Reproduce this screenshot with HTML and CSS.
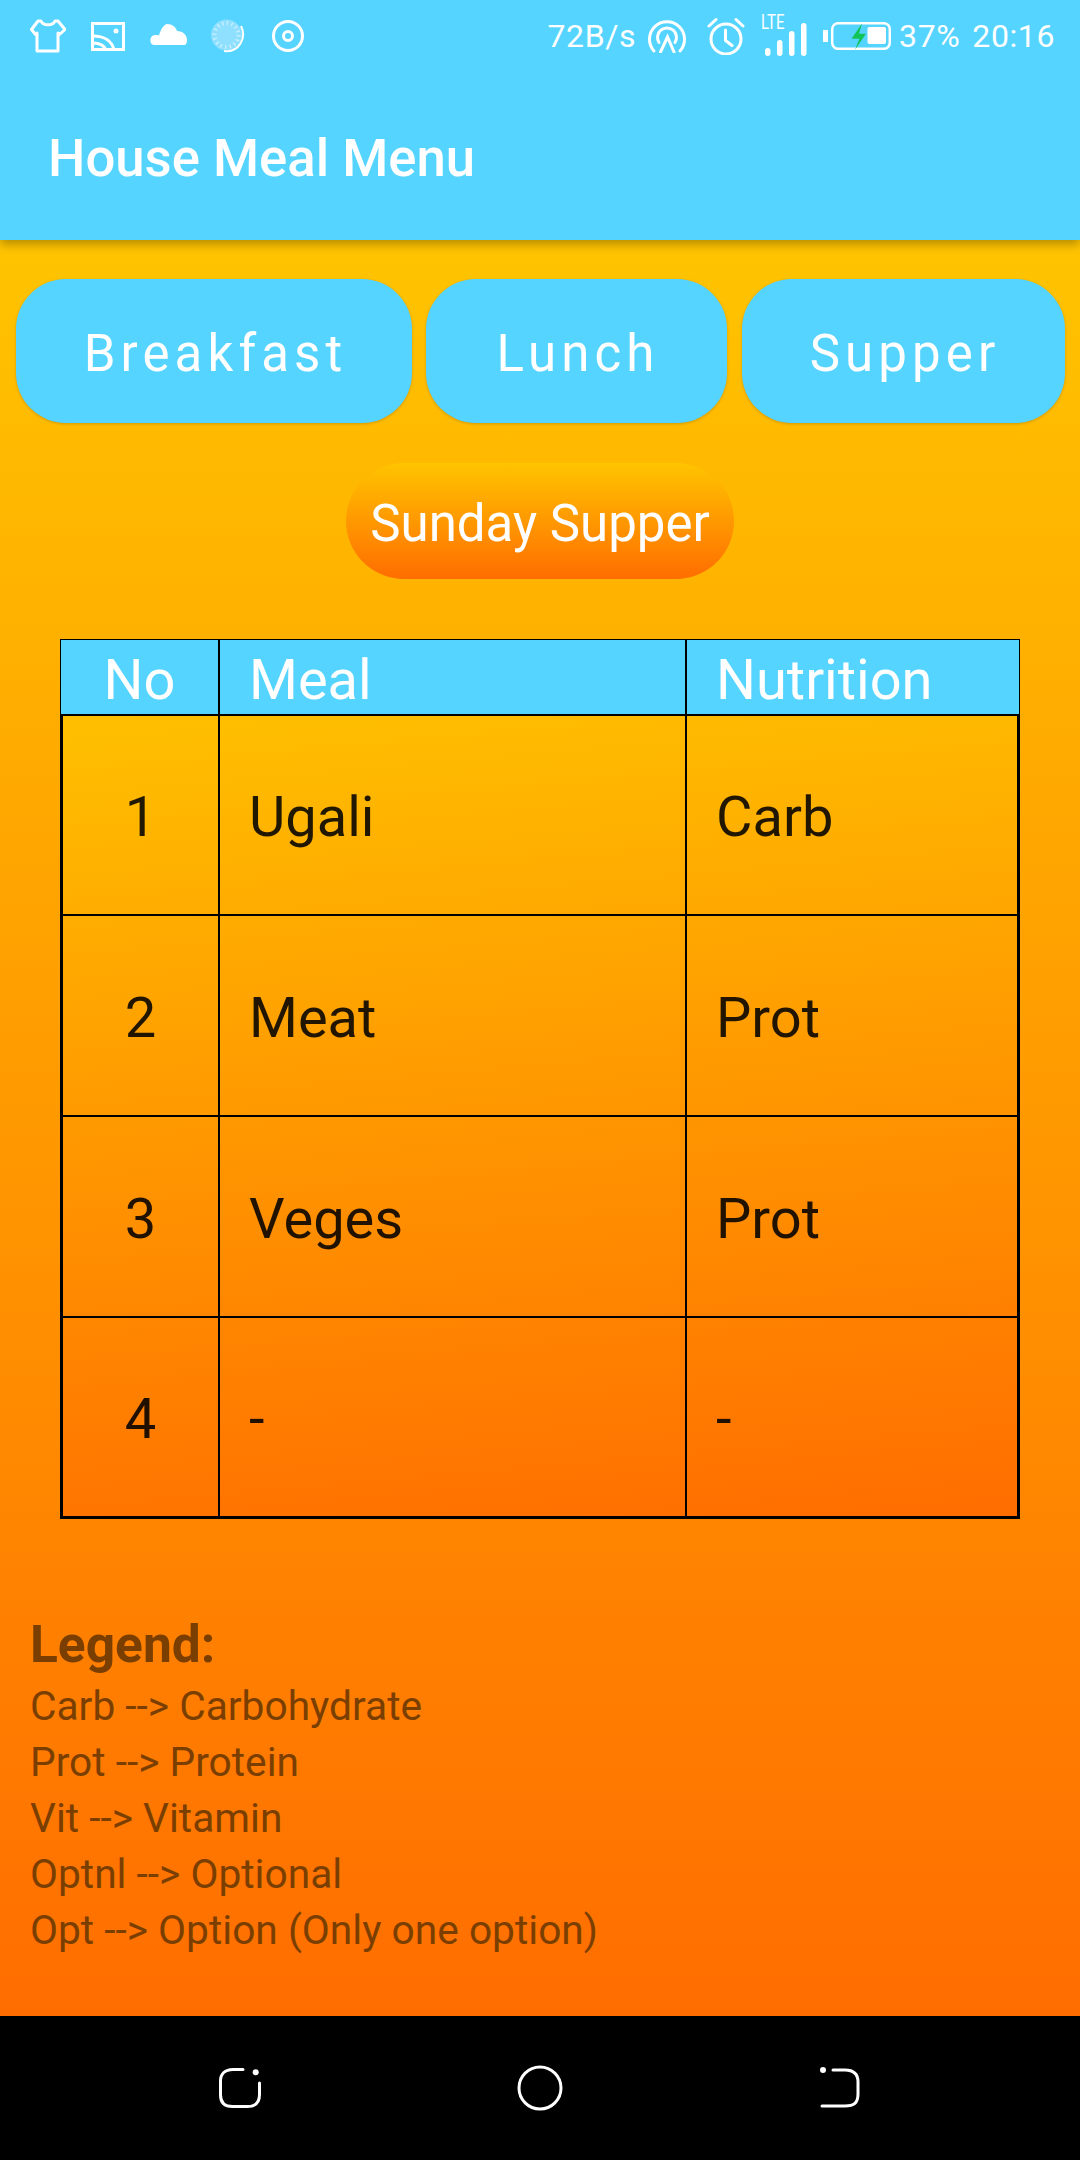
FILE: index.html
```html
<!doctype html>
<html>
<head>
<meta charset="utf-8">
<title>House Meal Menu</title>
<link rel="stylesheet" href="styles.css">
</head>
<body>
<div class="phone">
	<header class="appbar">
		<div class="status">
			<div class="status-left">
				<svg class="ic-shirt" width="36" height="34" viewBox="0 0 36 34" fill="none" stroke="#fff" stroke-width="3" stroke-linejoin="round"><path d="M8 2h3c2 5 12 5 14 0h3l7 8.5-5.5 5-1.5-1.5V32H7V14l-1.5 1.5-4-5z"/></svg>
				<svg width="34" height="29" viewBox="0 0 34 29" fill="none" stroke="#fff" stroke-width="3"><rect x="1.5" y="1.5" width="31" height="26"/><path d="M2 14c11 0 19 5 21 14M2 21c6 0 11 2 13 7"/><circle cx="25" cy="9" r="2.5" fill="#fff" stroke="none"/></svg>
				<svg class="ic-cloud" width="38" height="21" viewBox="0 0 38 21" fill="#fff"><path d="M5 21C0 21 0 11 6 11c1 0 3 0 4 .5C12 4 16 0 18 0c5 0 9 3 10 7 6 0 10 4 10 9 0 3-1 5-3 5z"/></svg>
				<svg width="35" height="36" viewBox="0 0 35 36"><circle cx="15.5" cy="17" r="15.5" fill="#8fe0ff"/><circle cx="15.5" cy="17" r="12" fill="none" stroke="#c4eeff" stroke-width="4" stroke-dasharray="1.5 3.2"/><path d="M30 8c6 12-2 27-17 25" fill="none" stroke="#fff" stroke-width="2"/></svg>
				<svg class="ic-disc" width="32" height="32" viewBox="0 0 32 32" fill="none" stroke="#fff" stroke-width="3"><circle cx="16" cy="16" r="14.5"/><circle cx="16" cy="16" r="4.5"/></svg>
			</div>
			<div class="status-right">
				<span>72B/s</span>
				<svg class="ic-wifi" width="38" height="34" viewBox="0 0 38 34" fill="none" stroke="#fff" stroke-width="3" stroke-linecap="round"><path d="M6 32A17.5 17.5 0 1 1 32 32"/><path d="M11 23.5A9.5 9.5 0 1 1 27 23.5"/><path d="M12.5 33L19.5 18 26 33"/></svg>
				<svg class="ic-alarm" width="38" height="38" viewBox="0 0 38 38" fill="none" stroke="#fff" stroke-width="3" stroke-linecap="round"><circle cx="19" cy="22" r="15"/><path d="M18.5 13v10.5l6.5 5M2 9l7-6.5M29 2.5L36 9"/></svg>
				<div class="signal">
					<span class="lte">LTE</span>
					<svg width="46" height="33" viewBox="0 0 46 33" fill="#fff"><rect x="4" y="25" width="5.5" height="8" rx="2.7"/><rect x="16" y="17" width="5.5" height="16" rx="2.7"/><rect x="28" y="8" width="5.5" height="25" rx="2.7"/><rect x="40" y="0" width="5.5" height="33" rx="2.7"/></svg>
				</div>
				<svg class="ic-batt" width="68" height="28" viewBox="0 0 68 28"><rect x="0" y="8" width="5" height="12" fill="#fff"/><rect x="9.2" y="1.2" width="57.6" height="25.6" rx="6" fill="none" stroke="#fff" stroke-width="2.5"/><rect x="44.5" y="5" width="18.5" height="17" rx="2" fill="#fff"/><path d="M39 1.5L28.5 16.7h7.9L32 27.7 43 11.7h-7z" fill="#12c458"/></svg>
				<span class="st-pct">37%</span>
				<span class="st-time">20:16</span>
			</div>
		</div>
		<h1 class="title">House Meal Menu</h1>
	</header>

	<main class="content">
		<div class="tabs">
			<a class="tab tab-b" href="#">Breakfast</a>
			<a class="tab tab-l" href="#">Lunch</a>
			<a class="tab tab-s" href="#">Supper</a>
		</div>

		<div class="day-wrap"><span class="day">Sunday Supper</span></div>

		<div class="grid-wrap">
			<div class="row head">
				<div class="cell num">No</div>
				<div class="cell">Meal</div>
				<div class="cell">Nutrition</div>
			</div>
			<div class="body">
				<div class="row"><div class="cell num">1</div><div class="cell">Ugali</div><div class="cell">Carb</div></div>
				<div class="row"><div class="cell num">2</div><div class="cell">Meat</div><div class="cell">Prot</div></div>
				<div class="row"><div class="cell num">3</div><div class="cell">Veges</div><div class="cell">Prot</div></div>
				<div class="row"><div class="cell num">4</div><div class="cell">-</div><div class="cell">-</div></div>
			</div>
		</div>

		<div class="legend">
			<h2>Legend:</h2>
			<p>Carb --&gt; Carbohydrate</p>
			<p>Prot --&gt; Protein</p>
			<p>Vit --&gt; Vitamin</p>
			<p>Optnl --&gt; Optional</p>
			<p>Opt --&gt; Option (Only one option)</p>
		</div>
	</main>

	<nav class="navbar">
		<svg width="44" height="42" viewBox="0 0 44 42" fill="none" stroke="#fff" stroke-width="3" stroke-linecap="round"><path d="M24 2.5H14C6 2.5 1.5 7 1.5 14v14c0 8 4 11.5 12 11.5h15c8 0 12-4 12-12V16"/><circle cx="36.7" cy="5.3" r="3" fill="#fff" stroke="none"/></svg>
		<svg width="46" height="46" viewBox="0 0 46 46" fill="none" stroke="#fff" stroke-width="3"><circle cx="23" cy="23" r="21"/></svg>
		<svg width="44" height="42" viewBox="0 0 44 42" fill="none" stroke="#fff" stroke-width="3" stroke-linecap="round"><path d="M17 3h12c9 0 13 4 13 12v12c0 9-4 12-13 12H6"/><circle cx="7" cy="3" r="3" fill="#fff" stroke="none"/></svg>
	</nav>
</div>
</body>
</html>
```

FILE: styles.css
```css
*{ margin:0; padding:0; box-sizing:border-box; }
html,body{ height:100%; }
body{ font-family:Roboto,"Liberation Sans",sans-serif; }
a{ text-decoration:none; color:#fff; }

.phone{ width:1080px; height:2160px; display:flex; flex-direction:column; overflow:hidden; }

/* top */
.appbar{ height:240px; flex:none; background:#55d4ff; color:#fff; box-shadow:0 4px 10px rgba(0,0,0,.3); position:relative; z-index:1; }
.status{ height:72px; display:flex; justify-content:space-between; align-items:center; }
.status-left{ display:flex; align-items:center; gap:24px; padding-left:30px; }
.ic-shirt{ margin-right:1px; }
.ic-cloud{ margin-bottom:3px; }
.ic-disc{ margin-left:2px; }
.status-right{ display:flex; align-items:center; padding-right:25px; font-size:32px; letter-spacing:.6px; }
.ic-wifi{ margin-left:12px; }
.ic-alarm{ margin-left:21px; }
.signal{ position:relative; width:46px; height:40px; margin-left:16px; }
.signal svg{ position:absolute; left:0; bottom:0; }
.lte{ position:absolute; left:0; top:-4px; font-size:20px; letter-spacing:0; line-height:20px; transform:scaleX(.75); transform-origin:left; }
.ic-batt{ margin-left:16px; }
.st-pct{ margin-left:8px; }
.st-time{ margin-left:12px; }
.title{ font-size:52.7px; font-weight:500; padding:66px 0 0 48px; line-height:40px; }

/* main */
.content{ flex:1; background:linear-gradient(#ffc400,#ff6d00); padding:39px 15px 0; }
.tabs{ display:flex; padding-left:1px; }
.tab{ height:144px; border-radius:50px; background:#55d4ff; font-size:51px; letter-spacing:.1em; line-height:150px; padding-left:3px; text-align:center; box-shadow:0 1px 3px rgba(0,0,0,.18); }
.tab-b{ width:396px; }
.tab-l{ width:301px; margin-left:14px; }
.tab-s{ width:323px; margin-left:15px; }

.day-wrap{ display:flex; justify-content:center; margin-top:40px; }
.day{ width:388px; height:116px; border-radius:58px; background:linear-gradient(#ffc400,#ff6d00); color:#fff; font-size:51px; line-height:122px; text-align:center; }

.grid-wrap{ width:960px; margin:60px 0 0 45px; font-size:56px; }
.row{ display:grid; grid-template-columns:155px 467px 1fr; height:201px; align-items:center; color:rgba(0,0,0,.87); }
.cell{ height:100%; display:flex; align-items:center; padding:4px 0 0 29px; border-left:2px solid #000; }
.cell.num{ padding-left:0; justify-content:center; border-left:0; }
.head{ height:75px; grid-template-columns:157px 467px 1fr; background:#55d4ff; color:#fff; border:1px solid #000; border-bottom:0; }
.head .cell{ padding-top:5px; }
.body{ background:linear-gradient(175deg,#ffc000,#ff6d00); border:3px solid #000; border-top-width:2px; }
.body .row + .row{ border-top:2px solid #000; }
.body .row:first-child{ height:198px; }
.body .row:last-child{ height:200px; }

.legend{ margin:93px 0 0 15px; color:#7a3f00; font-size:40.7px; line-height:56px; }
.legend h2{ font-size:51.5px; font-weight:700; line-height:66px; }

.navbar{ height:144px; flex:none; background:#000; display:flex; justify-content:space-between; align-items:center; padding:0 220px 0 219px; }
```
